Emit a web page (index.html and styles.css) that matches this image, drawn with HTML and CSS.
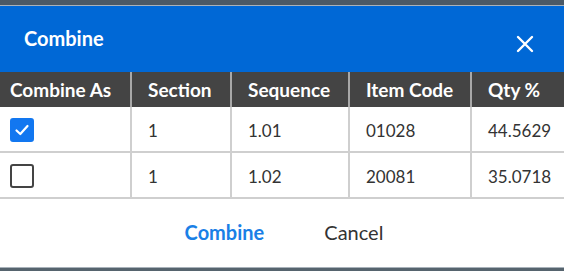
FILE: index.html
```html
<!DOCTYPE html>
<html lang="en">
<head>
    <meta charset="UTF-8">
    <meta name="viewport" content="width=device-width, initial-scale=1.0">
    <title>Combine</title>
    <link rel="stylesheet" href="styles.css">
</head>
<body>
    <div class="backdrop-top"></div>
    <div class="dialog">
        <div class="dialog-header">
            <span class="dialog-title">Combine</span>
            <button class="close-btn" aria-label="Close">
                <svg width="18" height="18" viewBox="0 0 18 18">
                    <path d="M2 2 L16 16 M16 2 L2 16" stroke="#fff" stroke-width="2.4" stroke-linecap="round"/>
                </svg>
            </button>
        </div>

        <table class="grid">
            <thead>
                <tr>
                    <th class="col-check">Combine As</th>
                    <th class="col-section">Section</th>
                    <th class="col-seq">Sequence</th>
                    <th class="col-item">Item Code</th>
                    <th class="col-qty">Qty %</th>
                </tr>
            </thead>
            <tbody>
                <tr>
                    <td class="col-check"><span class="checkbox checked">
                        <svg width="16" height="16" viewBox="0 0 16 16">
                            <path d="M2.5 8.5 L6.3 12 L13.5 4" fill="none" stroke="#fff" stroke-width="2.2" stroke-linecap="round" stroke-linejoin="round"/>
                        </svg>
                    </span></td>
                    <td>1</td>
                    <td>1.01</td>
                    <td>01028</td>
                    <td>44.5629</td>
                </tr>
                <tr>
                    <td class="col-check"><span class="checkbox"></span></td>
                    <td>1</td>
                    <td>1.02</td>
                    <td>20081</td>
                    <td>35.0718</td>
                </tr>
            </tbody>
        </table>

        <div class="dialog-footer">
            <button class="btn btn-primary">Combine</button>
            <button class="btn">Cancel</button>
        </div>
    </div>
    <div class="backdrop-bottom"></div>
</body>
</html>
```

FILE: styles.css
```css
body {
    margin: 0;
    padding: 0;
    overflow: hidden;
    font-family: Lato, "Open Sans", sans-serif;
    background-color: #4f5d68;
}
.backdrop-top {
    height: 5px;
    background-color: #4b5966;
    border-bottom: 1px solid #a9b2ba;
}
.backdrop-bottom {
    height: 5px;
    border-top: 1px solid #a9b2ba;
    background-color: #56646e;
}
.dialog {
    background-color: white;
}
.dialog-header {
    height: 66px;
    padding: 0 30px 0 24px;
    display: flex;
    align-items: center;
    justify-content: space-between;
    background-color: #0068d6;
    color: white;
}
.dialog-title {
    font-size: 20px;
    font-weight: 700;
    margin-top: -2px;
}
.close-btn {
    background: none;
    border: none;
    padding: 0;
    margin-top: 9px;
    display: flex;
    cursor: pointer;
}
.grid {
    width: 100%;
    border-collapse: collapse;
    table-layout: fixed;
}
.grid th {
    height: 35px;
    padding: 0 0 0 16px;
    line-height: 1;
    text-align: left;
    font-size: 19px;
    font-weight: 700;
    color: white;
    background-color: #444444;
    border-left: 2px solid #a8a8a8;
}
.grid td {
    height: 42px;
    padding: 2px 0 0 16px;
    line-height: 1;
    font-size: 17px;
    color: #333;
    border-left: 2px solid #cfcfcf;
    border-bottom: 2px solid #cfcfcf;
}
.grid th:first-child,
.grid td:first-child {
    border-left: none;
    padding-left: 10px;
}
.col-check { width: 120px; }
.col-section { width: 82px; }
.col-seq { width: 100px; }
.col-item { width: 104px; }
.checkbox {
    display: flex;
    align-items: center;
    justify-content: center;
    width: 20px;
    height: 20px;
    border: 2px solid #444;
    border-radius: 3px;
}
.checkbox.checked {
    background-color: #1277f0;
    border-color: #1277f0;
}
.dialog-footer {
    height: 68px;
    display: flex;
    justify-content: center;
    align-items: center;
    gap: 20px;
    padding: 0 0 3px 4px;
    box-sizing: border-box;
}
.btn {
    background: none;
    border: none;
    padding: 4px 20px;
    font-family: inherit;
    font-size: 20px;
    font-weight: 700;
    color: #444;
    cursor: pointer;
}
.btn-primary {
    color: #1a80e6;
}
.btn + .btn {
    font-weight: 400;
    color: #333;
}
```
